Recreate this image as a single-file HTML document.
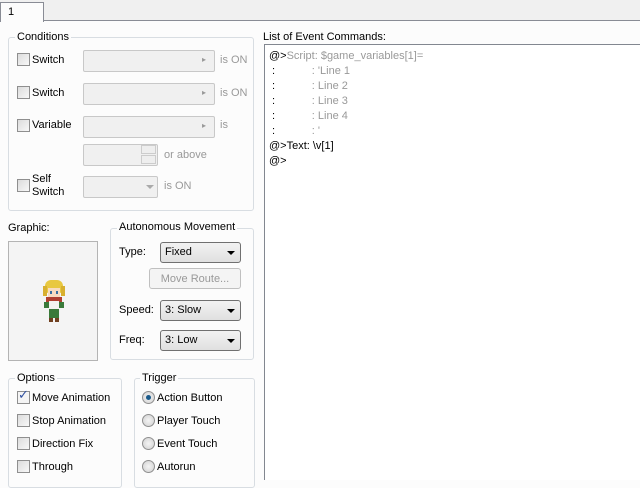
<!DOCTYPE html>
<html><head><meta charset="utf-8"><style>
*{margin:0;padding:0;box-sizing:border-box}
body{width:640px;height:480px;overflow:hidden;background:#fcfcfc;font-family:"Liberation Sans",sans-serif;font-size:11px;color:#000;position:relative}
.a{position:absolute;white-space:nowrap}
.grp{position:absolute;border:1px solid #d8dde2;border-radius:3px}
.gl{position:absolute;background:#fcfcfc;padding:0 2px;font-size:11px}
.cb{position:absolute;width:13px;height:13px;border:1px solid #8f8f8f;background:linear-gradient(135deg,#dcdcdc,#f8f8f8)}
.rb{position:absolute;width:13px;height:13px;border:1px solid #8f8f8f;border-radius:50%;background:radial-gradient(#f4f4f4,#d0d0d0)}
.dis{position:absolute;border:1px solid #c8c8c8;background:#f0f0f0;border-radius:2px}
.cmb{position:absolute;border:1px solid #707070;border-radius:3px;background:linear-gradient(#f2f2f2,#e0e0e0);padding:3px 0 0 4px;font-size:11px}
.cmb:after{content:"";position:absolute;right:5px;top:8px;border-left:4px solid transparent;border-right:4px solid transparent;border-top:4px solid #000}
.g{color:#999}
.ev{position:absolute;left:264px;top:44px;width:376px;height:436px;background:#fff;border:1px solid #828790;border-right:none;border-bottom:none;font-size:11px}
.ev div{position:absolute;left:4px;white-space:pre}
</style></head><body>
<div class="a" style="left:0;top:0;width:640px;height:21px;background:#f0f0f0;border-bottom:1px solid #898c95"></div>
<div class="a" style="left:0;top:2px;width:44px;height:20px;background:#fcfcfc;border:1px solid #898c95;border-bottom:none;padding:3px 0 0 7px">1</div>

<div class="grp" style="left:8px;top:37px;width:246px;height:174px"></div>
<div class="gl" style="left:15px;top:31px">Conditions</div>
<div class="cb" style="left:17px;top:53px"></div><div class="a" style="left:32px;top:54px">Switch</div>
<div class="cb" style="left:17px;top:86px"></div><div class="a" style="left:32px;top:87px">Switch</div>
<div class="cb" style="left:17px;top:119px"></div><div class="a" style="left:32px;top:119px">Variable</div>
<div class="cb" style="left:17px;top:179px"></div><div class="a" style="left:32px;top:173px;line-height:13px">Self<br>Switch</div>
<div class="dis" style="left:83px;top:50px;width:132px;height:22px"></div><div class="a g" style="left:202px;top:55px;font-size:8px">▸</div>
<div class="dis" style="left:83px;top:83px;width:132px;height:22px"></div><div class="a g" style="left:202px;top:88px;font-size:8px">▸</div>
<div class="dis" style="left:83px;top:116px;width:132px;height:22px"></div><div class="a g" style="left:202px;top:121px;font-size:8px">▸</div>
<div class="dis" style="left:83px;top:144px;width:75px;height:22px"></div>
<div class="a" style="left:141px;top:145px;width:15px;height:9px;border:1px solid #ccc;background:#eee"></div>
<div class="a" style="left:141px;top:155px;width:15px;height:9px;border:1px solid #ccc;background:#eee"></div>
<div class="dis" style="left:83px;top:176px;width:75px;height:22px"></div>
<div class="a" style="left:146px;top:185px;border-left:4px solid transparent;border-right:4px solid transparent;border-top:4px solid #aaa"></div>
<div class="a g" style="left:220px;top:54px">is ON</div>
<div class="a g" style="left:220px;top:87px">is ON</div>
<div class="a g" style="left:220px;top:119px">is</div>
<div class="a g" style="left:164px;top:149px">or above</div>
<div class="a g" style="left:164px;top:180px">is ON</div>

<div class="a" style="left:8px;top:222px">Graphic:</div>
<div class="a" style="left:8px;top:241px;width:90px;height:120px;background:#f4f4f4;border:1px solid #b4b4b4"></div>
<svg class="a" style="left:40px;top:278px" width="28" height="46" viewBox="0 0 28 46">
<rect x="5" y="2" width="18" height="14" rx="6" fill="#e8c840"/>
<rect x="3" y="8" width="4" height="10" fill="#d8b030"/><rect x="21" y="8" width="4" height="10" fill="#d8b030"/>
<rect x="8" y="10" width="12" height="9" fill="#f8dcc0"/>
<rect x="10" y="13" width="2" height="3" fill="#3a70a0"/><rect x="16" y="13" width="2" height="3" fill="#3a70a0"/>
<rect x="6" y="19" width="16" height="6" fill="#b04030"/>
<rect x="9" y="23" width="10" height="8" fill="#f4f4f0"/>
<rect x="4" y="24" width="5" height="6" fill="#3a7a3a"/><rect x="19" y="24" width="5" height="6" fill="#3a7a3a"/>
<rect x="9" y="31" width="10" height="9" fill="#3a7a3a"/>
<rect x="9" y="40" width="4" height="4" fill="#704020"/><rect x="15" y="40" width="4" height="4" fill="#704020"/>
</svg>

<div class="grp" style="left:110px;top:228px;width:144px;height:132px"></div>
<div class="gl" style="left:117px;top:221px">Autonomous Movement</div>
<div class="a" style="left:119px;top:246px">Type:</div>
<div class="cmb" style="left:160px;top:242px;width:81px;height:21px">Fixed</div>
<div class="a g" style="left:149px;top:268px;width:92px;height:21px;border:1px solid #c0c0c0;border-radius:3px;background:#f4f4f4;text-align:center;padding-top:4px">Move Route...</div>
<div class="a" style="left:119px;top:304px">Speed:</div>
<div class="cmb" style="left:160px;top:300px;width:81px;height:21px">3: Slow</div>
<div class="a" style="left:119px;top:334px">Freq:</div>
<div class="cmb" style="left:160px;top:330px;width:81px;height:21px">3: Low</div>

<div class="grp" style="left:8px;top:378px;width:114px;height:110px"></div>
<div class="gl" style="left:15px;top:372px">Options</div>
<div class="cb" style="left:17px;top:391px;background:#f4f4f4"></div><div class="a" style="left:18px;top:387px;color:#3050a0;font-size:13px">✓</div>
<div class="a" style="left:32px;top:392px">Move Animation</div>
<div class="cb" style="left:17px;top:414px"></div><div class="a" style="left:32px;top:415px">Stop Animation</div>
<div class="cb" style="left:17px;top:437px"></div><div class="a" style="left:32px;top:438px">Direction Fix</div>
<div class="cb" style="left:17px;top:460px"></div><div class="a" style="left:32px;top:461px">Through</div>

<div class="grp" style="left:134px;top:378px;width:121px;height:110px"></div>
<div class="gl" style="left:140px;top:372px">Trigger</div>
<div class="rb" style="left:142px;top:391px"></div><div class="a" style="left:146px;top:395px;width:5px;height:5px;border-radius:50%;background:#1a5a8a"></div>
<div class="a" style="left:157px;top:392px">Action Button</div>
<div class="rb" style="left:142px;top:414px"></div><div class="a" style="left:157px;top:415px">Player Touch</div>
<div class="rb" style="left:142px;top:437px"></div><div class="a" style="left:157px;top:438px">Event Touch</div>
<div class="rb" style="left:142px;top:460px"></div><div class="a" style="left:157px;top:461px">Autorun</div>

<div class="a" style="left:263px;top:31px">List of Event Commands:</div>
<div class="ev">
<div style="top:5px">@&gt;<span class="g">Script: $game_variables[1]=</span></div>
<div style="top:20px"> :            <span class="g">: 'Line 1</span></div>
<div style="top:35px"> :            <span class="g">: Line 2</span></div>
<div style="top:50px"> :            <span class="g">: Line 3</span></div>
<div style="top:65px"> :            <span class="g">: Line 4</span></div>
<div style="top:80px"> :            <span class="g">: '</span></div>
<div style="top:95px">@&gt;Text: \v[1]</div>
<div style="top:110px">@&gt;</div>
</div>
</body></html>
